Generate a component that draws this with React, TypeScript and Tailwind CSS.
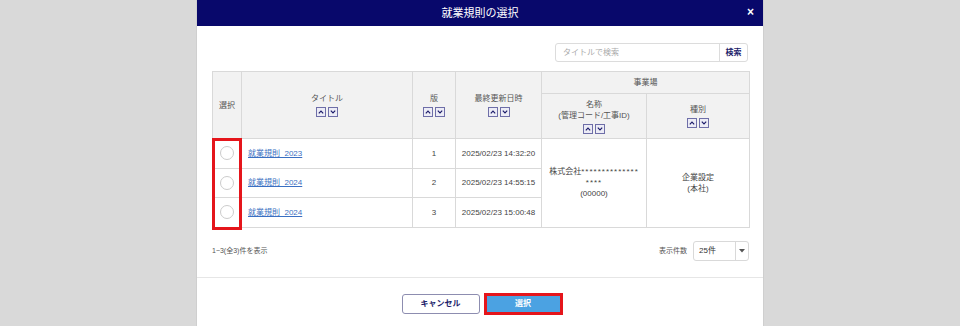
import React from "react";

const font = { fontFamily: '"Liberation Sans", "Noto Sans CJK JP", sans-serif' };

function SortButtons() {
  return (
    <div className="flex justify-center gap-[2px] mt-[3px]">
      <span className="w-[10px] h-[10px] border border-[#6e6ea8] bg-[#ececf6] flex items-center justify-center">
        <svg width="6" height="4" viewBox="0 0 6 4">
          <path d="M0.8 3.4 L3 1.2 L5.2 3.4" fill="none" stroke="#1c1c6a" strokeWidth="1.2" />
        </svg>
      </span>
      <span className="w-[10px] h-[10px] border border-[#6e6ea8] bg-[#ececf6] flex items-center justify-center">
        <svg width="6" height="4" viewBox="0 0 6 4">
          <path d="M0.8 0.6 L3 2.8 L5.2 0.6" fill="none" stroke="#1c1c6a" strokeWidth="1.2" />
        </svg>
      </span>
    </div>
  );
}

type Row = { id: number; title: string; ver: number; updated: string };

const rows: Row[] = [
  { id: 1, title: "就業規則_2023", ver: 1, updated: "2025/02/23 14:32:20" },
  { id: 2, title: "就業規則_2024", ver: 2, updated: "2025/02/23 14:55:15" },
  { id: 3, title: "就業規則_2024", ver: 3, updated: "2025/02/23 15:00:48" },
];

export default function App() {
  const th = "border border-[#d9d9d9] bg-[#f2f2f2] font-normal text-[#555] text-[8px] leading-[11px] text-center align-middle";
  const td = "border border-[#d9d9d9] text-[#444] text-[8px] leading-[11px] align-middle";

  return (
    <div className="w-[960px] h-[326px] bg-[#d9d9d9] flex justify-center overflow-hidden" style={font}>
      <div className="w-[568px] h-full bg-white flex flex-col border-l border-r border-[#cfcfcf]">
        {/* ヘッダー */}
        <div className="h-[26px] bg-[#08086b] relative flex items-center justify-center shrink-0">
          <span className="text-white text-[11px]">就業規則の選択</span>
          <span className="absolute right-[9px] top-[6px] text-white text-[12px] font-bold leading-none">×</span>
        </div>

        <div className="px-[15px] flex flex-col">
          {/* 検索 */}
          <div className="flex justify-end mt-[17px]">
            <div className="flex h-[19px] border border-[#dcdcdc] rounded-[3px] w-[193px]">
              <div className="flex-1 flex items-center px-[7px] text-[8px] text-[#aaa]">タイトルで検索</div>
              <div className="w-[28px] border-l border-[#dcdcdc] flex items-center justify-center text-[8px] font-bold text-[#1c1c6a]">
                検索
              </div>
            </div>
          </div>

          {/* テーブル */}
          <div className="relative mt-[9px]">
            <table className="w-[537px] border-collapse table-fixed">
              <colgroup>
                <col className="w-[29px]" />
                <col className="w-[171px]" />
                <col className="w-[43px]" />
                <col className="w-[86px]" />
                <col className="w-[105px]" />
                <col className="w-[103px]" />
              </colgroup>
              <thead>
                <tr className="h-[22px]">
                  <th rowSpan={2} className={th}>選択</th>
                  <th rowSpan={2} className={th}>
                    タイトル
                    <SortButtons />
                  </th>
                  <th rowSpan={2} className={th}>
                    版
                    <SortButtons />
                  </th>
                  <th rowSpan={2} className={th}>
                    最終更新日時
                    <SortButtons />
                  </th>
                  <th colSpan={2} className={th}>事業場</th>
                </tr>
                <tr className="h-[45px]">
                  <th className={th}>
                    名称
                    <br />
                    (管理コード/工事ID)
                    <SortButtons />
                  </th>
                  <th className={th}>
                    種別
                    <SortButtons />
                  </th>
                </tr>
              </thead>
              <tbody>
                {rows.map((r, i) => (
                  <tr key={r.id} className="h-[29.6px]">
                    <td className={td}>
                      <div className="w-[14px] h-[14px] rounded-full border border-[#cccccc] mx-auto" />
                    </td>
                    <td className={td + " px-[6px]"}>
                      <span className="text-[#3b6fc2] underline">{r.title}</span>
                    </td>
                    <td className={td + " text-center"}>{r.ver}</td>
                    <td className={td + " text-center text-[7.5px]"}>{r.updated}</td>
                    {i === 0 && (
                      <>
                        <td rowSpan={3} className={td + " text-center"}>
                          株式会社<span className="tracking-[1px]">**************</span>
                          <br />
                          <span className="tracking-[1px]">****</span>
                          <br />
                          (00000)
                        </td>
                        <td rowSpan={3} className={td + " text-center"}>
                          企業設定
                          <br />
                          (本社)
                        </td>
                      </>
                    )}
                  </tr>
                ))}
              </tbody>
            </table>
            {/* 選択列の強調枠 */}
            <div className="absolute left-0 top-[67px] w-[30px] h-[92px] border-[3px] border-[#e5151b]" />
          </div>

          {/* 件数・表示件数 */}
          <div className="flex items-center justify-between mt-[13px] w-[537px]">
            <span className="text-[7px] text-[#555]">1~3(全3)件を表示</span>
            <div className="flex items-center gap-[6px]">
              <span className="text-[7px] text-[#555]">表示件数</span>
              <div className="flex h-[20px] w-[56px] border border-[#d9d9d9] rounded-[3px]">
                <div className="flex-1 flex items-center px-[5px] text-[8px] text-[#333]">25件</div>
                <div className="w-[13px] border-l border-[#d9d9d9] flex items-center justify-center">
                  <svg width="6" height="4" viewBox="0 0 6 4">
                    <path d="M0 0 L6 0 L3 3.5 Z" fill="#555" />
                  </svg>
                </div>
              </div>
            </div>
          </div>
        </div>

        {/* フッター */}
        <div className="mt-[16px] border-t border-[#e6e6e6] flex justify-center gap-[4px] pt-[16px] pl-[4px]">
          <button className="w-[78px] h-[20px] border border-[#8d8db0] rounded-[3px] bg-white text-[8px] font-bold text-[#1c1c6a]">
            キャンセル
          </button>
          <button className="w-[79px] h-[22px] -mt-[1px] border-[3px] border-[#e5151b] bg-[#4ba2e2] text-[8px] font-bold text-white">
            選択
          </button>
        </div>
      </div>
    </div>
  );
}
